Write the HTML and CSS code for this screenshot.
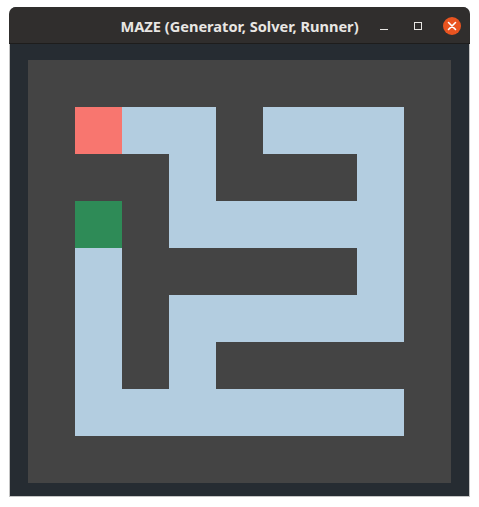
FILE: index.html
```html
<!DOCTYPE html>
<html>
<head>
<meta charset="utf-8">
<link rel="stylesheet" href="styles.css">
</head>
<body>
<div class="window">
  <div class="titlebar">
    <span class="title">MAZE (Generator, Solver, Runner)</span>
    <div class="controls">
      <span class="btn-min"></span>
      <span class="btn-max"></span>
      <span class="btn-close">
        <svg width="18" height="18" viewBox="0 0 18 18"><path d="M5.5 5.5 L12.5 12.5 M12.5 5.5 L5.5 12.5" stroke="#fff" stroke-width="1.6" stroke-linecap="round"/></svg>
      </span>
    </div>
  </div>
  <div class="content">
    <div class="maze">
      <div></div><div></div><div></div><div></div><div></div><div></div><div></div><div></div><div></div>
      <div></div><div class="start"></div><div class="p"></div><div class="p"></div><div></div><div class="p"></div><div class="p"></div><div class="p"></div><div></div>
      <div></div><div></div><div></div><div class="p"></div><div></div><div></div><div></div><div class="p"></div><div></div>
      <div></div><div class="goal"></div><div></div><div class="p"></div><div class="p"></div><div class="p"></div><div class="p"></div><div class="p"></div><div></div>
      <div></div><div class="p"></div><div></div><div></div><div></div><div></div><div></div><div class="p"></div><div></div>
      <div></div><div class="p"></div><div></div><div class="p"></div><div class="p"></div><div class="p"></div><div class="p"></div><div class="p"></div><div></div>
      <div></div><div class="p"></div><div></div><div class="p"></div><div></div><div></div><div></div><div></div><div></div>
      <div></div><div class="p"></div><div class="p"></div><div class="p"></div><div class="p"></div><div class="p"></div><div class="p"></div><div class="p"></div><div></div>
      <div></div><div></div><div></div><div></div><div></div><div></div><div></div><div></div><div></div>
    </div>
  </div>
</div>
</body>
</html>
```
FILE: styles.css
```css
html, body {
  margin: 0;
  padding: 0;
  background: #ffffff;
}
body {
  padding: 7px 0 0 9px;
  font-family: "Noto Sans", "DejaVu Sans", sans-serif;
}
.window {
  width: 459px;
  border: 1px solid #c4c4c4;
  border-top: none;
  border-radius: 7px 7px 0 0;
  background: #262c32;
}
.titlebar {
  position: relative;
  height: 36px;
  background: #302e2d;
  border-bottom: 1px solid #1e1d1c;
  border-radius: 7px 7px 0 0;
  margin: 0 -1px;
  display: flex;
  align-items: center;
  justify-content: center;
}
.title {
  color: #e8e6e3;
  font-weight: bold;
  font-size: 14.6px;
  letter-spacing: 0;
  line-height: 1;
  margin-top: 2px;
}
.controls {
  position: absolute;
  right: 9px;
  top: 10px;
  display: flex;
  align-items: center;
  height: 18px;
}
.btn-min {
  display: block;
  width: 8px;
  height: 1px;
  background: #e8e6e3;
  margin-top: 6px;
}
.btn-max {
  display: block;
  width: 6px;
  height: 6px;
  border: 1px solid #e8e6e3;
  margin-left: 26px;
}
.btn-close {
  display: block;
  width: 18px;
  height: 18px;
  border-radius: 50%;
  background: #e95420;
  margin-left: 21px;
}
.btn-close svg {
  display: block;
}
.content {
  padding: 16px 18px 13px 18px;
}
.maze {
  display: grid;
  grid-template-columns: repeat(9, 47px);
  grid-template-rows: repeat(9, 47px);
  background: #444444;
}
.maze .p {
  background: #b3cde0;
}
.maze .start {
  background: #f8766f;
}
.maze .goal {
  background: #2e8b57;
}
```
